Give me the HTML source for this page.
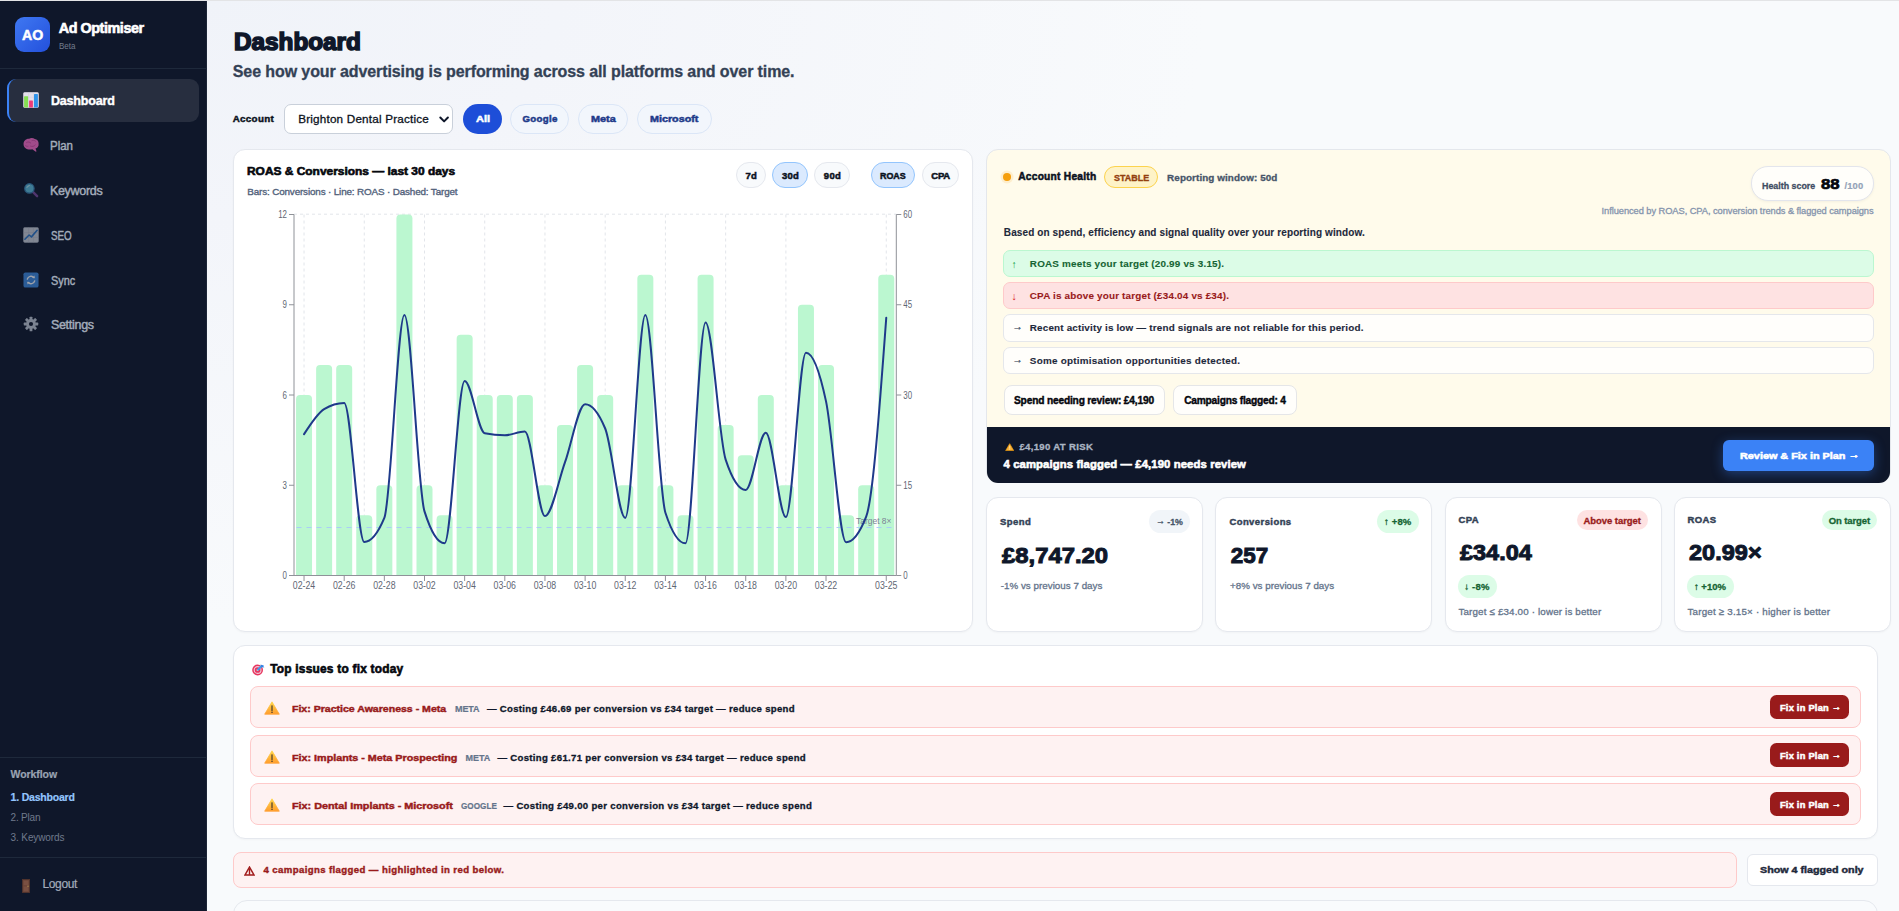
<!DOCTYPE html><html lang="en"><head><meta charset="utf-8"><title>Ad Optimiser — Dashboard</title>
<style>
*{box-sizing:content-box}
html,body{margin:0;padding:0;width:1899px;height:911px;overflow:hidden}
body{font-family:"Liberation Sans","DejaVu Sans",sans-serif;background:#f8fafc;position:relative;-webkit-font-smoothing:antialiased}
.topline{position:absolute;left:0;top:0;width:1899px;height:1px;background:#e3e4e6;z-index:9}
.side{position:absolute;left:0;top:0;width:206px;height:911px;background:#0f172a;border-right:1px solid #1c2537;overflow:hidden}
.main{position:absolute;left:207px;top:0;width:1692px;height:911px;overflow:hidden;
 background:radial-gradient(ellipse 1000px 620px at 0 0,#f0f3f9 0%,#f3f5fa 35%,#f8fafc 100%)}
.pg{position:absolute;left:-207px;top:0;width:1899px;height:911px}
.t{position:absolute;white-space:nowrap;line-height:16px;display:block}
.b{position:absolute;display:block}
.ic{position:absolute;display:block;line-height:0}
.hr{position:absolute;left:0;width:206px;height:1px;background:#1e293b}
svg text{font-family:"Liberation Sans","DejaVu Sans",sans-serif}

.ar{font-style:normal;position:relative;top:-.12em}

</style></head><body>
<div class="topline"></div>
<aside class="side">
<div class="b " style="left:15.0px;top:17.0px;width:35.0px;height:35.0px;border-radius:9px;background:linear-gradient(135deg,#3f78f2 0%,#2350dc 100%);"></div>
<span class="t" style="left: 22.3px; top: 27px; font-size: 14.6px; font-weight: 700; color: rgb(255, 255, 255); -webkit-text-stroke: 0.5px rgb(255, 255, 255); transform: scaleX(0.971); transform-origin: 0px 50%;">AO</span>
<span class="t" style="left: 58.7px; top: 20px; font-size: 14.4px; font-weight: 700; color: rgb(255, 255, 255); -webkit-text-stroke: 0.6px rgb(255, 255, 255); letter-spacing: -0.45px;">Ad Optimiser</span>
<span class="t" style="left: 58.8px; top: 38px; font-size: 9px; font-weight: 400; color: rgb(115, 125, 141); transform: scaleX(0.891); transform-origin: 0px 50%;">Beta</span>
<div class="hr" style="top:68px"></div>
<div class="b " style="left:7.0px;top:79.0px;width:192.0px;height:43.0px;border-radius:9px;background:#272e3f;border-left:2px solid #3b82f6;box-sizing:border-box;"></div>
<span class="ic" style="left:23px;top:91.8px;opacity:1"><svg width="16" height="16" viewBox="0 0 16 16"><rect x=".3" y=".3" width="15.4" height="15.4" rx="1.8" fill="#e3dfea" stroke="#cfcad8" stroke-width=".6"></rect><path d="M5.6 .5v15M10.6 .5v15M.5 5.3h15M.5 10.3h15" stroke="#d2cddb" stroke-width=".5"></path><rect x="1.1" y="4.2" width="4" height="11.4" rx=".5" fill="#86df52"></rect><rect x="6.1" y="8.6" width="3.8" height="7" rx=".5" fill="#ee3c78"></rect><rect x="11" y="2" width="3.9" height="13.6" rx=".5" fill="#2f93ea"></rect></svg></span>
<span class="t" style="left: 50.9px; top: 93px; font-size: 12.5px; font-weight: 700; color: rgb(255, 255, 255); -webkit-text-stroke: 0.4px rgb(255, 255, 255); letter-spacing: -0.17px;">Dashboard</span>
<span class="ic" style="left:23px;top:137.3px;opacity:0.78"><svg width="16" height="16" viewBox="0 0 16 16"><path d="M.6 7.6C.2 4.2 2.8 1.5 6.1 1.7 7.8.6 10.4.800 11.8 2c2.4.2 4 2.2 3.8 4.7.3 2.4-1 4.3-3.1 4.7l.9 2.5c.2.6-.5 1-1 .6L9.3 12.2c-2.5.6-5.3.3-7-1.2C1.1 10.1.6 8.9.6 7.6z" fill="#c95aa6"></path><path d="M3.5 5.6c1.6-1.2 3.4-.7 4.3.5M7.6 9.2c1.7.7 3.5.2 4.6-1.2M5 9.3c-1 .3-2 0-2.6-.7M9 3.5c1.2-.5 2.6-.2 3.4.7" fill="none" stroke="#a63f86" stroke-width=".9" stroke-linecap="round"></path></svg></span>
<span class="t" style="left: 50px; top: 138px; font-size: 12.5px; font-weight: 400; color: rgb(163, 172, 186); -webkit-text-stroke: 0.45px rgb(163, 172, 186); transform: scaleX(0.918); transform-origin: 0px 50%;">Plan</span>
<span class="ic" style="left:23px;top:182.1px;opacity:0.6"><svg width="16" height="16" viewBox="0 0 17 17"><path d="M10.2 10.2 15 15" stroke="#7a4a9a" stroke-width="2.6" stroke-linecap="round"></path><circle cx="6.8" cy="6.8" r="5" fill="#5fc0dc" stroke="#3a7fae" stroke-width="1.3"></circle><path d="M4.2 5.8a3 3 0 0 1 2.6-2" stroke="#d7f2fa" stroke-width="1" fill="none" stroke-linecap="round"></path></svg></span>
<span class="t" style="left: 49.9px; top: 183px; font-size: 12.5px; font-weight: 400; color: rgb(163, 172, 186); -webkit-text-stroke: 0.45px rgb(163, 172, 186); letter-spacing: -0.3px;">Keywords</span>
<span class="ic" style="left:23px;top:227.0px;opacity:0.55"><svg width="16" height="16" viewBox="0 0 17 17"><rect x=".5" y=".5" width="16" height="16" rx="1.5" fill="#dfe3ea" stroke="#b9bfca" stroke-width=".6"></rect><path d="M.5 6h16M.5 11h16M6 .5v16M11 .5v16" stroke="#c3c8d2" stroke-width=".5"></path><path d="M2 13 6.5 8.5 9 10.5 15 3.5" fill="none" stroke="#2f7fd6" stroke-width="1.7" stroke-linecap="round" stroke-linejoin="round"></path></svg></span>
<span class="t" style="left: 50.9px; top: 228px; font-size: 12.5px; font-weight: 400; color: rgb(163, 172, 186); -webkit-text-stroke: 0.45px rgb(163, 172, 186); transform: scaleX(0.785); transform-origin: 0px 50%;">SEO</span>
<span class="ic" style="left:23px;top:272.3px;opacity:0.6"><svg width="16" height="16" viewBox="0 0 17 17"><rect x=".5" y=".5" width="16" height="16" rx="2" fill="#3f8be0"></rect><path d="M4.6 7.6a4 4 0 0 1 7-1.6M12.4 9.4a4 4 0 0 1-7 1.6" fill="none" stroke="#fff" stroke-width="1.5" stroke-linecap="round"></path><path d="M12.3 3.6v2.8h-2.8zM4.7 13.4v-2.8h2.8z" fill="#fff"></path></svg></span>
<span class="t" style="left: 50.9px; top: 273px; font-size: 12.5px; font-weight: 400; color: rgb(163, 172, 186); -webkit-text-stroke: 0.45px rgb(163, 172, 186); transform: scaleX(0.868); transform-origin: 0px 50%;">Sync</span>
<span class="ic" style="left:23px;top:316.3px;opacity:0.7"><svg width="16" height="16" viewBox="0 0 17 17"><g fill="#aab1bd"><circle cx="8.5" cy="8.5" r="5.2"></circle><g id="gt"><rect x="7" y=".8" width="3" height="3.4" rx=".6"></rect><rect x="7" y="12.8" width="3" height="3.4" rx=".6"></rect><rect x=".8" y="7" width="3.4" height="3" rx=".6"></rect><rect x="12.8" y="7" width="3.4" height="3" rx=".6"></rect></g><g transform="rotate(45 8.5 8.5)"><rect x="7" y=".8" width="3" height="3.4" rx=".6"></rect><rect x="7" y="12.8" width="3" height="3.4" rx=".6"></rect><rect x=".8" y="7" width="3.4" height="3" rx=".6"></rect><rect x="12.8" y="7" width="3.4" height="3" rx=".6"></rect></g></g><circle cx="8.5" cy="8.5" r="2.2" fill="#0f172a"></circle></svg></span>
<span class="t" style="left: 50.9px; top: 317px; font-size: 12.5px; font-weight: 400; color: rgb(163, 172, 186); -webkit-text-stroke: 0.45px rgb(163, 172, 186); letter-spacing: -0.28px;">Settings</span>
<div class="hr" style="top:757px"></div>
<span class="t" style="left: 10.6px; top: 766px; font-size: 10.5px; font-weight: 700; color: rgb(154, 163, 178); -webkit-text-stroke: 0.2px rgb(154, 163, 178); letter-spacing: -0.08px;">Workflow</span>
<span class="t" style="left: 10.6px; top: 789px; font-size: 10.5px; font-weight: 700; color: rgb(147, 197, 253); -webkit-text-stroke: 0.2px rgb(147, 197, 253); letter-spacing: -0.21px;">1. Dashboard</span>
<span class="t" style="left: 10.5px; top: 810px; font-size: 10px; font-weight: 400; color: rgb(111, 122, 140); letter-spacing: -0.18px;">2. Plan</span>
<span class="t" style="left: 10.5px; top: 830px; font-size: 10px; font-weight: 400; color: rgb(111, 122, 140); letter-spacing: -0.1px;">3. Keywords</span>
<div class="hr" style="top:857px"></div>
<span class="ic" style="left:22px;top:879px;opacity:.85"><svg width="8" height="14" viewBox="0 0 8 14"><rect x=".4" y=".4" width="7.2" height="13.2" fill="#7f4f3d" stroke="#5f3a2d" stroke-width=".8"></rect><rect x="1.7" y="1.8" width="4.6" height="4.3" fill="#8d5b47"></rect><rect x="1.7" y="7.6" width="4.6" height="4.6" fill="#8d5b47"></rect><circle cx="6" cy="7.2" r=".6" fill="#d9b45c"></circle></svg></span>
<span class="t" style="left: 42.6px; top: 876px; font-size: 12px; font-weight: 400; color: rgb(163, 172, 186); -webkit-text-stroke: 0.2px rgb(163, 172, 186); letter-spacing: -0.41px;">Logout</span>
</aside>
<main class="main"><div class="pg">
<span class="t" style="left: 233.7px; top: 34px; font-size: 23.5px; font-weight: 700; color: rgb(15, 23, 42); -webkit-text-stroke: 1.6px rgb(15, 23, 42); transform: scaleX(1.034); transform-origin: 0px 50%;">Dashboard</span>
<span class="t" style="left: 232.8px; top: 64px; font-size: 16px; font-weight: 700; color: rgb(51, 65, 85); -webkit-text-stroke: 0.3px rgb(51, 65, 85); letter-spacing: -0.1px;">See how your advertising is performing across all platforms and over time.</span>
<span class="t" style="left: 232.7px; top: 111px; font-size: 9.8px; font-weight: 700; color: rgb(11, 17, 32); -webkit-text-stroke: 0.45px rgb(11, 17, 32); letter-spacing: 0.32px;">Account</span>
<div class="b " style="left:284.0px;top:104.0px;width:168.5px;height:29.5px;border-radius:7px;background:#fff;border:1px solid #c9d0da;box-sizing:border-box;"></div>
<span class="t" style="left: 298.2px; top: 111px; font-size: 11.7px; font-weight: 400; color: rgb(11, 17, 32); -webkit-text-stroke: 0.3px rgb(11, 17, 32); letter-spacing: 0.2px;">Brighton Dental Practice</span>
<svg class="b" style="left:438px;top:115px" width="12" height="9" viewBox="0 0 12 9"><path d="M2.3 2.5 6.1 6.4 9.9 2.5" fill="none" stroke="#0f172a" stroke-width="2" stroke-linecap="round" stroke-linejoin="round"></path></svg>
<div class="b " style="left:463.0px;top:104.0px;width:39.0px;height:30.0px;border-radius:15px;background:#1d4ed8;"></div>
<span class="t" style="left: 475.9px; top: 111px; font-size: 9.7px; font-weight: 700; color: rgb(255, 255, 255); -webkit-text-stroke: 0.5px rgb(255, 255, 255); transform: scaleX(1.141); transform-origin: 0px 50%;">All</span>
<div class="b " style="left:510.3px;top:104.0px;width:59.2px;height:30.0px;border-radius:15px;background:#f2f6fc;border:1px solid #dbe6f7;box-sizing:border-box;"></div>
<span class="t" style="left: 522.5px; top: 111px; font-size: 9.7px; font-weight: 700; color: rgb(30, 58, 138); -webkit-text-stroke: 0.5px rgb(30, 58, 138); letter-spacing: 0.3px;">Google</span>
<div class="b " style="left:577.9px;top:104.0px;width:50.6px;height:30.0px;border-radius:15px;background:#f2f6fc;border:1px solid #dbe6f7;box-sizing:border-box;"></div>
<span class="t" style="left: 590.9px; top: 111px; font-size: 9.7px; font-weight: 700; color: rgb(30, 58, 138); -webkit-text-stroke: 0.5px rgb(30, 58, 138); transform: scaleX(1.117); transform-origin: 0px 50%;">Meta</span>
<div class="b " style="left:637.0px;top:104.0px;width:74.7px;height:30.0px;border-radius:15px;background:#f2f6fc;border:1px solid #dbe6f7;box-sizing:border-box;"></div>
<span class="t" style="left: 649.9px; top: 111px; font-size: 9.7px; font-weight: 700; color: rgb(30, 58, 138); -webkit-text-stroke: 0.5px rgb(30, 58, 138); transform: scaleX(1.11); transform-origin: 0px 50%;">Microsoft</span>
<div class="b " style="left:233.0px;top:149.0px;width:740.0px;height:483.0px;border-radius:12px;background:#fff;border:1px solid #e5e8ee;box-sizing:border-box;box-shadow:0 1px 2px rgba(15,23,42,.03);"></div>
<span class="t" style="left: 246.9px; top: 163px; font-size: 11.1px; font-weight: 700; color: rgb(5, 7, 13); -webkit-text-stroke: 0.6px rgb(5, 7, 13); transform: scaleX(1.075); transform-origin: 0px 50%;">ROAS &amp; Conversions — last 30 days</span>
<span class="t" style="left: 247.3px; top: 184px; font-size: 9.9px; font-weight: 400; color: rgb(82, 98, 123); -webkit-text-stroke: 0.35px rgb(82, 98, 123); letter-spacing: -0.15px;">Bars: Conversions · Line: ROAS · Dashed: Target</span>
<div class="b " style="left:736.1px;top:162.0px;width:29.9px;height:25.7px;border-radius:13px;box-sizing:border-box;background:#f8fafc;border:1px solid #e5e8ee;"></div>
<span class="t" style="left: 745.5px; top: 168px; font-size: 9.5px; font-weight: 700; color: rgb(11, 17, 32); -webkit-text-stroke: 0.5px rgb(11, 17, 32); letter-spacing: 0.22px;">7d</span>
<div class="b " style="left:772.1px;top:162.0px;width:35.6px;height:25.7px;border-radius:13px;box-sizing:border-box;background:#dbeafe;border:1px solid #93c5fd;"></div>
<span class="t" style="left: 781.9px; top: 168px; font-size: 9.5px; font-weight: 700; color: rgb(11, 17, 32); -webkit-text-stroke: 0.5px rgb(11, 17, 32); letter-spacing: 0.32px;">30d</span>
<div class="b " style="left:814.4px;top:162.0px;width:35.4px;height:25.7px;border-radius:13px;box-sizing:border-box;background:#f8fafc;border:1px solid #e5e8ee;"></div>
<span class="t" style="left: 823.8px; top: 168px; font-size: 9.5px; font-weight: 700; color: rgb(11, 17, 32); -webkit-text-stroke: 0.5px rgb(11, 17, 32); letter-spacing: 0.32px;">90d</span>
<div class="b " style="left:870.9px;top:162.0px;width:43.9px;height:25.7px;border-radius:13px;box-sizing:border-box;background:#dbeafe;border:1px solid #93c5fd;"></div>
<span class="t" style="left: 880.3px; top: 168px; font-size: 9.5px; font-weight: 700; color: rgb(11, 17, 32); -webkit-text-stroke: 0.5px rgb(11, 17, 32); transform: scaleX(0.938); transform-origin: 0px 50%;">ROAS</span>
<div class="b " style="left:922.1px;top:162.0px;width:36.7px;height:25.7px;border-radius:13px;box-sizing:border-box;background:#f8fafc;border:1px solid #e5e8ee;"></div>
<span class="t" style="left: 931.3px; top: 168px; font-size: 9.5px; font-weight: 700; color: rgb(11, 17, 32); -webkit-text-stroke: 0.5px rgb(11, 17, 32); letter-spacing: -0.25px;">CPA</span>
<div class="b" style="left:233px;top:150px"><svg class="chart" width="740" height="482" viewBox="233 150 740 482">
<g stroke="#e2e5ea" stroke-width="1" stroke-dasharray="3 3" fill="none">
<line x1="294.0" y1="214.2" x2="896.3" y2="214.2"></line>
<line x1="304.04" y1="214.5" x2="304.04" y2="575.5"></line>
<line x1="364.27" y1="214.5" x2="364.27" y2="575.5"></line>
<line x1="424.50" y1="214.5" x2="424.50" y2="575.5"></line>
<line x1="484.73" y1="214.5" x2="484.73" y2="575.5"></line>
<line x1="544.96" y1="214.5" x2="544.96" y2="575.5"></line>
<line x1="605.19" y1="214.5" x2="605.19" y2="575.5"></line>
<line x1="665.42" y1="214.5" x2="665.42" y2="575.5"></line>
<line x1="725.65" y1="214.5" x2="725.65" y2="575.5"></line>
<line x1="785.88" y1="214.5" x2="785.88" y2="575.5"></line>
<line x1="886.26" y1="214.5" x2="886.26" y2="575.5"></line>
</g>
<g fill="#bbf7d0">
<path d="M296.04,575.50V399.00Q296.04,395.00,300.04,395.00H308.04Q312.04,395.00,312.04,399.00V575.50Z"></path>
<path d="M316.12,575.50V368.92Q316.12,364.92,320.12,364.92H328.12Q332.12,364.92,332.12,368.92V575.50Z"></path>
<path d="M336.19,575.50V368.92Q336.19,364.92,340.19,364.92H348.19Q352.19,364.92,352.19,368.92V575.50Z"></path>
<path d="M356.27,575.50V519.33Q356.27,515.33,360.27,515.33H368.27Q372.27,515.33,372.27,519.33V575.50Z"></path>
<path d="M376.34,575.50V489.25Q376.34,485.25,380.34,485.25H388.34Q392.34,485.25,392.34,489.25V575.50Z"></path>
<path d="M396.42,575.50V218.50Q396.42,214.50,400.42,214.50H408.42Q412.42,214.50,412.42,218.50V575.50Z"></path>
<path d="M416.50,575.50V489.25Q416.50,485.25,420.50,485.25H428.50Q432.50,485.25,432.50,489.25V575.50Z"></path>
<path d="M436.57,575.50V519.33Q436.57,515.33,440.57,515.33H448.57Q452.57,515.33,452.57,519.33V575.50Z"></path>
<path d="M456.65,575.50V338.83Q456.65,334.83,460.65,334.83H468.65Q472.65,334.83,472.65,338.83V575.50Z"></path>
<path d="M476.73,575.50V399.00Q476.73,395.00,480.73,395.00H488.73Q492.73,395.00,492.73,399.00V575.50Z"></path>
<path d="M496.80,575.50V399.00Q496.80,395.00,500.80,395.00H508.80Q512.80,395.00,512.80,399.00V575.50Z"></path>
<path d="M516.88,575.50V399.00Q516.88,395.00,520.88,395.00H528.88Q532.88,395.00,532.88,399.00V575.50Z"></path>
<path d="M536.96,575.50V489.25Q536.96,485.25,540.96,485.25H548.96Q552.96,485.25,552.96,489.25V575.50Z"></path>
<path d="M557.03,575.50V429.08Q557.03,425.08,561.03,425.08H569.03Q573.03,425.08,573.03,429.08V575.50Z"></path>
<path d="M577.11,575.50V368.92Q577.11,364.92,581.11,364.92H589.11Q593.11,364.92,593.11,368.92V575.50Z"></path>
<path d="M597.19,575.50V399.00Q597.19,395.00,601.19,395.00H609.19Q613.19,395.00,613.19,399.00V575.50Z"></path>
<path d="M617.26,575.50V489.25Q617.26,485.25,621.26,485.25H629.26Q633.26,485.25,633.26,489.25V575.50Z"></path>
<path d="M637.34,575.50V278.67Q637.34,274.67,641.34,274.67H649.34Q653.34,274.67,653.34,278.67V575.50Z"></path>
<path d="M657.42,575.50V489.25Q657.42,485.25,661.42,485.25H669.42Q673.42,485.25,673.42,489.25V575.50Z"></path>
<path d="M677.49,575.50V519.33Q677.49,515.33,681.49,515.33H689.49Q693.49,515.33,693.49,519.33V575.50Z"></path>
<path d="M697.57,575.50V278.67Q697.57,274.67,701.57,274.67H709.57Q713.57,274.67,713.57,278.67V575.50Z"></path>
<path d="M717.65,575.50V429.08Q717.65,425.08,721.65,425.08H729.65Q733.65,425.08,733.65,429.08V575.50Z"></path>
<path d="M737.72,575.50V459.17Q737.72,455.17,741.72,455.17H749.72Q753.72,455.17,753.72,459.17V575.50Z"></path>
<path d="M757.80,575.50V399.00Q757.80,395.00,761.80,395.00H769.80Q773.80,395.00,773.80,399.00V575.50Z"></path>
<path d="M777.88,575.50V489.25Q777.88,485.25,781.88,485.25H789.88Q793.88,485.25,793.88,489.25V575.50Z"></path>
<path d="M797.95,575.50V308.75Q797.95,304.75,801.95,304.75H809.95Q813.95,304.75,813.95,308.75V575.50Z"></path>
<path d="M818.03,575.50V368.92Q818.03,364.92,822.03,364.92H830.03Q834.03,364.92,834.03,368.92V575.50Z"></path>
<path d="M838.11,575.50V519.33Q838.11,515.33,842.11,515.33H850.11Q854.11,515.33,854.11,519.33V575.50Z"></path>
<path d="M858.18,575.50V489.25Q858.18,485.25,862.18,485.25H870.18Q874.18,485.25,874.18,489.25V575.50Z"></path>
<path d="M878.26,575.50V278.67Q878.26,274.67,882.26,274.67H890.26Q894.26,274.67,894.26,278.67V575.50Z"></path>
</g>
<line x1="296.5" y1="527.5" x2="896.3" y2="527.5" stroke="#a9cdf7" stroke-width="1" stroke-dasharray="5 5"></line>
<text x="891.5" y="524" text-anchor="end" font-size="9.5" fill="#7b8494" textLength="35.5" lengthAdjust="spacingAndGlyphs">Target 8×</text>
<g stroke="#8f9298" stroke-width="1" fill="none">
<line x1="294.0" y1="214.5" x2="294.0" y2="575.5"></line>
<line x1="896.3" y1="214.5" x2="896.3" y2="575.5"></line>
<line x1="294.0" y1="575.5" x2="896.3" y2="575.5"></line>
<line x1="289.0" y1="575.50" x2="294.0" y2="575.50"></line>
<line x1="896.3" y1="575.50" x2="901.3" y2="575.50"></line>
<line x1="289.0" y1="485.25" x2="294.0" y2="485.25"></line>
<line x1="896.3" y1="485.25" x2="901.3" y2="485.25"></line>
<line x1="289.0" y1="395.00" x2="294.0" y2="395.00"></line>
<line x1="896.3" y1="395.00" x2="901.3" y2="395.00"></line>
<line x1="289.0" y1="304.75" x2="294.0" y2="304.75"></line>
<line x1="896.3" y1="304.75" x2="901.3" y2="304.75"></line>
<line x1="289.0" y1="214.50" x2="294.0" y2="214.50"></line>
<line x1="896.3" y1="214.50" x2="901.3" y2="214.50"></line>
<line x1="304.04" y1="575.5" x2="304.04" y2="581.0"></line>
<line x1="344.19" y1="575.5" x2="344.19" y2="581.0"></line>
<line x1="384.34" y1="575.5" x2="384.34" y2="581.0"></line>
<line x1="424.50" y1="575.5" x2="424.50" y2="581.0"></line>
<line x1="464.65" y1="575.5" x2="464.65" y2="581.0"></line>
<line x1="504.80" y1="575.5" x2="504.80" y2="581.0"></line>
<line x1="544.96" y1="575.5" x2="544.96" y2="581.0"></line>
<line x1="585.11" y1="575.5" x2="585.11" y2="581.0"></line>
<line x1="625.26" y1="575.5" x2="625.26" y2="581.0"></line>
<line x1="665.42" y1="575.5" x2="665.42" y2="581.0"></line>
<line x1="705.57" y1="575.5" x2="705.57" y2="581.0"></line>
<line x1="745.72" y1="575.5" x2="745.72" y2="581.0"></line>
<line x1="785.88" y1="575.5" x2="785.88" y2="581.0"></line>
<line x1="826.03" y1="575.5" x2="826.03" y2="581.0"></line>
<line x1="886.26" y1="575.5" x2="886.26" y2="581.0"></line>
</g>
<g font-size="10" fill="#5f6774">
<text x="287.0" y="579.00" text-anchor="end" textLength="4.4" lengthAdjust="spacingAndGlyphs">0</text>
<text x="903.3" y="579.00" textLength="4.4" lengthAdjust="spacingAndGlyphs">0</text>
<text x="287.0" y="488.75" text-anchor="end" textLength="4.4" lengthAdjust="spacingAndGlyphs">3</text>
<text x="903.3" y="488.75" textLength="8.8" lengthAdjust="spacingAndGlyphs">15</text>
<text x="287.0" y="398.50" text-anchor="end" textLength="4.4" lengthAdjust="spacingAndGlyphs">6</text>
<text x="903.3" y="398.50" textLength="8.8" lengthAdjust="spacingAndGlyphs">30</text>
<text x="287.0" y="308.25" text-anchor="end" textLength="4.4" lengthAdjust="spacingAndGlyphs">9</text>
<text x="903.3" y="308.25" textLength="8.8" lengthAdjust="spacingAndGlyphs">45</text>
<text x="287.0" y="218.00" text-anchor="end" textLength="8.8" lengthAdjust="spacingAndGlyphs">12</text>
<text x="903.3" y="218.00" textLength="8.8" lengthAdjust="spacingAndGlyphs">60</text>
<text x="304.04" y="589.4" text-anchor="middle" textLength="22.4" lengthAdjust="spacingAndGlyphs">02-24</text>
<text x="344.19" y="589.4" text-anchor="middle" textLength="22.4" lengthAdjust="spacingAndGlyphs">02-26</text>
<text x="384.34" y="589.4" text-anchor="middle" textLength="22.4" lengthAdjust="spacingAndGlyphs">02-28</text>
<text x="424.50" y="589.4" text-anchor="middle" textLength="22.4" lengthAdjust="spacingAndGlyphs">03-02</text>
<text x="464.65" y="589.4" text-anchor="middle" textLength="22.4" lengthAdjust="spacingAndGlyphs">03-04</text>
<text x="504.80" y="589.4" text-anchor="middle" textLength="22.4" lengthAdjust="spacingAndGlyphs">03-06</text>
<text x="544.96" y="589.4" text-anchor="middle" textLength="22.4" lengthAdjust="spacingAndGlyphs">03-08</text>
<text x="585.11" y="589.4" text-anchor="middle" textLength="22.4" lengthAdjust="spacingAndGlyphs">03-10</text>
<text x="625.26" y="589.4" text-anchor="middle" textLength="22.4" lengthAdjust="spacingAndGlyphs">03-12</text>
<text x="665.42" y="589.4" text-anchor="middle" textLength="22.4" lengthAdjust="spacingAndGlyphs">03-14</text>
<text x="705.57" y="589.4" text-anchor="middle" textLength="22.4" lengthAdjust="spacingAndGlyphs">03-16</text>
<text x="745.72" y="589.4" text-anchor="middle" textLength="22.4" lengthAdjust="spacingAndGlyphs">03-18</text>
<text x="785.88" y="589.4" text-anchor="middle" textLength="22.4" lengthAdjust="spacingAndGlyphs">03-20</text>
<text x="826.03" y="589.4" text-anchor="middle" textLength="22.4" lengthAdjust="spacingAndGlyphs">03-22</text>
<text x="886.26" y="589.4" text-anchor="middle" textLength="22.4" lengthAdjust="spacingAndGlyphs">03-25</text>
</g>
<path d="M304.04,434.20C310.73,423.72,317.42,413.23,324.12,409.10C330.81,404.97,337.50,402.90,344.19,402.90C350.88,402.90,357.58,542.00,364.27,542.00C370.96,542.00,377.65,533.97,384.34,517.90C391.04,501.83,397.73,315.10,404.42,315.10C411.11,315.10,417.81,490.13,424.50,511.40C431.19,532.67,437.88,543.30,444.57,543.30C451.27,543.30,457.96,380.90,464.65,380.90C471.34,380.90,478.04,431.80,484.73,433.20C491.42,434.60,498.11,435.30,504.80,435.30C511.50,435.30,518.19,431.40,524.88,431.40C531.57,431.40,538.27,516.10,544.96,516.10C551.65,516.10,558.34,480.85,565.03,462.20C571.73,443.55,578.42,404.20,585.11,404.20C591.80,404.20,598.50,412.30,605.19,428.50C611.88,444.70,618.57,517.90,625.26,517.90C631.96,517.90,638.65,315.10,645.34,315.10C652.03,315.10,658.73,492.30,665.42,512.70C672.11,533.10,678.80,543.30,685.49,543.30C692.19,543.30,698.88,322.40,705.57,322.40C712.26,322.40,718.96,439.40,725.65,459.60C732.34,479.80,739.03,489.90,745.72,489.90C752.42,489.90,759.11,432.70,765.80,432.70C772.49,432.70,779.19,517.10,785.88,517.10C792.57,517.10,799.26,352.70,805.95,352.70C812.65,352.70,819.34,369.82,826.03,401.40C832.72,432.98,839.42,542.20,846.11,542.20C852.80,542.20,859.49,533.67,866.18,516.60C872.88,499.53,879.57,408.62,886.26,317.70" fill="none" stroke="#1e3a8a" stroke-width="2" stroke-linecap="round" stroke-linejoin="round"></path>
</svg></div>
<div class="b " style="left:986.0px;top:149.0px;width:905.0px;height:334.0px;border-radius:12px;background:#fffbeb;border:1px solid #e4e7ec;box-sizing:border-box;"></div>
<div class="b " style="left:987.0px;top:427.0px;width:903.0px;height:55.7px;border-radius:0 0 11px 11px;background:#0f172a;"></div>
<div class="b " style="left:1002.9px;top:172.8px;width:8.4px;height:8.4px;border-radius:50%;background:#f59e0b;box-shadow:0 0 0 2.5px rgba(245,158,11,.13);"></div>
<span class="t" style="left: 1018.2px; top: 169px; font-size: 10.2px; font-weight: 700; color: rgb(11, 17, 32); -webkit-text-stroke: 0.5px rgb(11, 17, 32); letter-spacing: 0.25px;">Account Health</span>
<div class="b " style="left:1104.0px;top:166.0px;width:53.7px;height:22.0px;border-radius:11px;background:#fef3c7;border:1px solid #fcd34d;box-sizing:border-box;"></div>
<span class="t" style="left: 1113.7px; top: 170px; font-size: 9.9px; font-weight: 700; color: rgb(146, 64, 14); -webkit-text-stroke: 0.35px rgb(146, 64, 14); transform: scaleX(0.906); transform-origin: 0px 50%;">STABLE</span>
<span class="t" style="left: 1167.1px; top: 170px; font-size: 9.9px; font-weight: 700; color: rgb(71, 85, 105); -webkit-text-stroke: 0.3px rgb(71, 85, 105); letter-spacing: 0.08px;">Reporting window: 50d</span>
<div class="b " style="left:1751.3px;top:166.3px;width:122.5px;height:34.3px;border-radius:17px;background:#fffefa;border:1px solid #e3e5ec;box-sizing:border-box;box-shadow:0 1px 3px rgba(15,23,42,.05);"></div>
<span class="t" style="left: 1762px; top: 178px; font-size: 9.8px; font-weight: 700; color: rgb(63, 77, 99); -webkit-text-stroke: 0.3px rgb(63, 77, 99); transform: scaleX(0.904); transform-origin: 0px 50%;">Health score</span>
<span class="t" style="left: 1821.2px; top: 176px; font-size: 15.2px; font-weight: 700; color: rgb(5, 7, 13); -webkit-text-stroke: 0.7px rgb(5, 7, 13); transform: scaleX(1.102); transform-origin: 0px 50%;">88</span>
<span class="t" style="left: 1844.4px; top: 178px; font-size: 9.4px; font-weight: 700; color: rgb(148, 163, 184); -webkit-text-stroke: 0.2px rgb(148, 163, 184); letter-spacing: 0.19px;">/100</span>
<span class="t" style="left: 1601.5px; top: 203px; font-size: 9.3px; font-weight: 400; color: rgb(133, 148, 173); -webkit-text-stroke: 0.3px rgb(133, 148, 173); letter-spacing: -0.06px;">Influenced by ROAS, CPA, conversion trends &amp; flagged campaigns</span>
<span class="t" style="left: 1003.8px; top: 225px; font-size: 10px; font-weight: 700; color: rgb(30, 41, 59); -webkit-text-stroke: 0.1px rgb(30, 41, 59); letter-spacing: 0.11px;">Based on spend, efficiency and signal quality over your reporting window.</span>
<div class="b " style="left:1003.2px;top:250.3px;width:870.6px;height:26.5px;border-radius:7px;background:#dcfce7;border:1px solid #bbf7d0;box-sizing:border-box;"></div>
<span class="t" style="left:1011.6px;top:256px;font-size:10.5px;font-weight:700;color:#16a34a;">↑</span>
<span class="t" style="left: 1029.8px; top: 256px; font-size: 9.9px; font-weight: 700; color: rgb(22, 101, 52); -webkit-text-stroke: 0.1px rgb(22, 101, 52); letter-spacing: 0.2px;">ROAS meets your target (20.99 vs 3.15).</span>
<div class="b " style="left:1003.2px;top:282.2px;width:870.6px;height:27.2px;border-radius:7px;background:#fee2e2;border:1px solid #fecaca;box-sizing:border-box;"></div>
<span class="t" style="left:1011.6px;top:288px;font-size:10.5px;font-weight:700;color:#dc2626;">↓</span>
<span class="t" style="left: 1029.8px; top: 288px; font-size: 9.9px; font-weight: 700; color: rgb(153, 27, 27); -webkit-text-stroke: 0.1px rgb(153, 27, 27); letter-spacing: 0.19px;">CPA is above your target (£34.04 vs £34).</span>
<div class="b " style="left:1003.2px;top:314.1px;width:870.6px;height:27.5px;border-radius:7px;background:#fffefb;border:1px solid #e5e7eb;box-sizing:border-box;"></div>
<span class="t" style="left:1012.6px;top:320px;font-size:10px;font-weight:700;color:#475569;-webkit-text-stroke:0.3px #475569;"><i class="ar">→</i></span>
<span class="t" style="left: 1029.8px; top: 320px; font-size: 9.9px; font-weight: 700; color: rgb(30, 41, 59); -webkit-text-stroke: 0.1px rgb(30, 41, 59); letter-spacing: 0.17px;">Recent activity is low — trend signals are not reliable for this period.</span>
<div class="b " style="left:1003.2px;top:347.0px;width:870.6px;height:26.8px;border-radius:7px;background:#fffefb;border:1px solid #e5e7eb;box-sizing:border-box;"></div>
<span class="t" style="left:1012.6px;top:353px;font-size:10px;font-weight:700;color:#475569;-webkit-text-stroke:0.3px #475569;"><i class="ar">→</i></span>
<span class="t" style="left: 1029.8px; top: 353px; font-size: 9.9px; font-weight: 700; color: rgb(30, 41, 59); -webkit-text-stroke: 0.1px rgb(30, 41, 59); letter-spacing: 0.25px;">Some optimisation opportunities detected.</span>
<div class="b " style="left:1003.5px;top:385.4px;width:161.3px;height:29.2px;border-radius:8px;background:#fffefb;border:1px solid #e5e6e8;box-sizing:border-box;"></div>
<span class="t" style="left: 1014px; top: 393px; font-size: 10.2px; font-weight: 700; color: rgb(5, 7, 13); -webkit-text-stroke: 0.4px rgb(5, 7, 13); letter-spacing: -0.18px;">Spend needing review: £4,190</span>
<div class="b " style="left:1173.4px;top:385.4px;width:123.3px;height:29.2px;border-radius:8px;background:#fffefb;border:1px solid #e5e6e8;box-sizing:border-box;"></div>
<span class="t" style="left: 1184.2px; top: 393px; font-size: 10.2px; font-weight: 700; color: rgb(5, 7, 13); -webkit-text-stroke: 0.4px rgb(5, 7, 13); letter-spacing: -0.22px;">Campaigns flagged: 4</span>
<span class="ic" style="left:1004.6px;top:443px"><svg width="9.4" height="8.4" viewBox="0 0 16 15"><path d="M8 1.2 15.2 13.6H.8z" fill="#f8b23a" stroke="#f59e0b" stroke-width="1.2" stroke-linejoin="round"></path><path d="M8 5.5v4" stroke="#fde8b8" stroke-width="1.4" stroke-linecap="round"></path><circle cx="8" cy="11.6" r=".8" fill="#fde8b8"></circle></svg></span>
<span class="t" style="left: 1019.4px; top: 439px; font-size: 9.6px; font-weight: 700; color: rgb(170, 180, 195); -webkit-text-stroke: 0.3px rgb(170, 180, 195); letter-spacing: 0.32px;">£4,190 AT RISK</span>
<span class="t" style="left: 1003.5px; top: 456px; font-size: 11.3px; font-weight: 700; color: rgb(255, 255, 255); -webkit-text-stroke: 0.6px rgb(255, 255, 255); letter-spacing: 0.11px;">4 campaigns flagged — £4,190 needs review</span>
<div class="b " style="left:1723.1px;top:439.9px;width:151.1px;height:31.2px;border-radius:6px;background:#3b82f6;box-shadow:0 3px 12px rgba(59,130,246,.38);"></div>
<span class="t" style="left: 1739.9px; top: 448px; font-size: 9.6px; font-weight: 700; color: rgb(255, 255, 255); -webkit-text-stroke: 0.55px rgb(255, 255, 255); transform: scaleX(1.13); transform-origin: 0px 50%;">Review &amp; Fix in Plan <i class="ar">→</i></span>
<div class="b " style="left:986.0px;top:497.0px;width:217.2px;height:135.0px;border-radius:12px;background:#fff;border:1px solid #e5e8ee;box-sizing:border-box;box-shadow:0 1px 2px rgba(15,23,42,.03);"></div>
<div class="b " style="left:1215.2px;top:497.0px;width:217.2px;height:135.0px;border-radius:12px;background:#fff;border:1px solid #e5e8ee;box-sizing:border-box;box-shadow:0 1px 2px rgba(15,23,42,.03);"></div>
<div class="b " style="left:1444.5px;top:497.0px;width:217.2px;height:135.0px;border-radius:12px;background:#fff;border:1px solid #e5e8ee;box-sizing:border-box;box-shadow:0 1px 2px rgba(15,23,42,.03);"></div>
<div class="b " style="left:1673.8px;top:497.0px;width:217.2px;height:135.0px;border-radius:12px;background:#fff;border:1px solid #e5e8ee;box-sizing:border-box;box-shadow:0 1px 2px rgba(15,23,42,.03);"></div>
<span class="t" style="left: 1000.1px; top: 514px; font-size: 9.5px; font-weight: 700; color: rgb(51, 65, 85); -webkit-text-stroke: 0.45px rgb(51, 65, 85); letter-spacing: 0.41px;">Spend</span>
<div class="b " style="left:1149.2px;top:509.9px;width:40.7px;height:23.0px;border-radius:12px;background:#f1f5f9;"></div><span class="t" style="left: 1155.6px; top: 514px; font-size: 9.5px; font-weight: 700; color: rgb(71, 85, 105); -webkit-text-stroke: 0.3px rgb(71, 85, 105); transform: scaleX(0.928); transform-origin: 0px 50%;"><i class="ar">→</i> -1%</span>
<span class="t" style="left: 1001.8px; top: 548px; font-size: 22.4px; font-weight: 700; color: rgb(15, 23, 42); -webkit-text-stroke: 1px rgb(15, 23, 42); transform: scaleX(1.065); transform-origin: 0px 50%;">£8,747.20</span>
<span class="t" style="left: 1000.7px; top: 578px; font-size: 9.8px; font-weight: 400; color: rgb(100, 116, 139); -webkit-text-stroke: 0.3px rgb(100, 116, 139); letter-spacing: 0.02px;">-1% vs previous 7 days</span>
<span class="t" style="left: 1229.4px; top: 514px; font-size: 9.5px; font-weight: 700; color: rgb(51, 65, 85); -webkit-text-stroke: 0.45px rgb(51, 65, 85); letter-spacing: 0.42px;">Conversions</span>
<div class="b " style="left:1377.0px;top:509.9px;width:41.8px;height:23.0px;border-radius:12px;background:#dcfce7;"></div><span class="t" style="left: 1383.9px; top: 514px; font-size: 9.5px; font-weight: 700; color: rgb(22, 101, 52); -webkit-text-stroke: 0.3px rgb(22, 101, 52); letter-spacing: 0.19px;">↑ +8%</span>
<span class="t" style="left: 1230.8px; top: 548px; font-size: 22.4px; font-weight: 700; color: rgb(15, 23, 42); -webkit-text-stroke: 1px rgb(15, 23, 42); letter-spacing: 0.05px;">257</span>
<span class="t" style="left: 1230px; top: 578px; font-size: 9.8px; font-weight: 400; color: rgb(100, 116, 139); -webkit-text-stroke: 0.3px rgb(100, 116, 139); letter-spacing: 0.02px;">+8% vs previous 7 days</span>
<span class="t" style="left: 1458.4px; top: 512px; font-size: 9.5px; font-weight: 700; color: rgb(51, 65, 85); -webkit-text-stroke: 0.45px rgb(51, 65, 85); letter-spacing: 0.38px;">CPA</span>
<div class="b " style="left:1577.3px;top:510.2px;width:70.6px;height:19.9px;border-radius:12px;background:#fee2e2;"></div><span class="t" style="left: 1583.5px; top: 513px; font-size: 9.5px; font-weight: 700; color: rgb(153, 27, 27); -webkit-text-stroke: 0.3px rgb(153, 27, 27); letter-spacing: -0.05px;">Above target</span>
<span class="t" style="left: 1460px; top: 545px; font-size: 22.4px; font-weight: 700; color: rgb(15, 23, 42); -webkit-text-stroke: 1px rgb(15, 23, 42); transform: scaleX(1.048); transform-origin: 0px 50%;">£34.04</span>
<div class="b " style="left:1458.2px;top:575.0px;width:38.8px;height:22.6px;border-radius:12px;background:#dcfce7;"></div><span class="t" style="left: 1464.2px; top: 579px; font-size: 9.5px; font-weight: 700; color: rgb(22, 101, 52); -webkit-text-stroke: 0.3px rgb(22, 101, 52); letter-spacing: 0.27px;">↓ -8%</span>
<span class="t" style="left: 1458.4px; top: 604px; font-size: 9.8px; font-weight: 400; color: rgb(100, 116, 139); -webkit-text-stroke: 0.3px rgb(100, 116, 139); letter-spacing: 0.16px;">Target ≤ £34.00 · lower is better</span>
<span class="t" style="left: 1687.5px; top: 512px; font-size: 9.5px; font-weight: 700; color: rgb(51, 65, 85); -webkit-text-stroke: 0.45px rgb(51, 65, 85); letter-spacing: 0.41px;">ROAS</span>
<div class="b " style="left:1822.2px;top:510.2px;width:54.6px;height:19.9px;border-radius:12px;background:#dcfce7;"></div><span class="t" style="left: 1828.7px; top: 513px; font-size: 9.5px; font-weight: 700; color: rgb(22, 101, 52); -webkit-text-stroke: 0.3px rgb(22, 101, 52); letter-spacing: -0.1px;">On target</span>
<span class="t" style="left: 1688.9px; top: 545px; font-size: 22.4px; font-weight: 700; color: rgb(15, 23, 42); -webkit-text-stroke: 1px rgb(15, 23, 42); transform: scaleX(1.051); transform-origin: 0px 50%;">20.99×</span>
<div class="b " style="left:1687.3px;top:575.0px;width:46.6px;height:22.6px;border-radius:12px;background:#dcfce7;"></div><span class="t" style="left: 1694px; top: 579px; font-size: 9.5px; font-weight: 700; color: rgb(22, 101, 52); -webkit-text-stroke: 0.3px rgb(22, 101, 52); letter-spacing: -0.02px;">↑ +10%</span>
<span class="t" style="left: 1687.5px; top: 604px; font-size: 9.8px; font-weight: 400; color: rgb(100, 116, 139); -webkit-text-stroke: 0.3px rgb(100, 116, 139); letter-spacing: 0.19px;">Target ≥ 3.15× · higher is better</span>
<div class="b " style="left:233.0px;top:645.0px;width:1645.0px;height:194.0px;border-radius:12px;background:#fff;border:1px solid #e5e8ee;box-sizing:border-box;box-shadow:0 1px 2px rgba(15,23,42,.03);"></div>
<span class="ic" style="left:251.5px;top:663px"><svg width="13" height="13" viewBox="0 0 13 13"><circle cx="5.6" cy="7" r="5.4" fill="#e8365f"></circle><circle cx="5.6" cy="7" r="3.4" fill="none" stroke="#ecc9d8" stroke-width="1.1"></circle><circle cx="5.6" cy="7" r="1.1" fill="#d9cfd9"></circle><path d="M6.2 6.4 9.6 3" stroke="#3d9be9" stroke-width="2.1" stroke-linecap="round"></path><path d="M8.6 1.2 10 2.2 11.6 1.9 11.3 3.3 12.4 4.3 10.6 4.6 9.2 3.6z" fill="#2f7fe3"></path></svg></span>
<span class="t" style="left: 270.2px; top: 661px; font-size: 11.9px; font-weight: 700; color: rgb(5, 7, 13); -webkit-text-stroke: 0.6px rgb(5, 7, 13); letter-spacing: 0.23px;">Top issues to fix today</span>
<div class="b " style="left:250.3px;top:686.0px;width:1610.5px;height:41.7px;border-radius:8px;background:#fef2f2;border:1px solid #fecaca;box-sizing:border-box;"></div>
<span class="ic" style="left:263.7px;top:701.0px"><svg width="16" height="14" viewBox="0 0 16 14"><defs><linearGradient id="wg" x1="0" y1="0" x2="0" y2="1"><stop offset="0" stop-color="#ffd54a"></stop><stop offset="1" stop-color="#ff9d2e"></stop></linearGradient></defs><path d="M8 .8 15.3 13.2H.700z" fill="url(#wg)" stroke="url(#wg)" stroke-width=".8" stroke-linejoin="round"></path><path d="M8 4.8v4.6" stroke="#33302b" stroke-width="1.1" stroke-linecap="round"></path><circle cx="8" cy="11.3" r=".75" fill="#33302b"></circle></svg></span>
<span class="t" style="left: 291.8px; top: 701px; font-size: 9.6px; font-weight: 700; color: rgb(153, 27, 27); -webkit-text-stroke: 0.45px rgb(153, 27, 27); transform: scaleX(1.099); transform-origin: 0px 50%;">Fix: Practice Awareness - Meta</span>
<span class="t" style="left: 455px; top: 701px; font-size: 9px; font-weight: 700; color: rgb(100, 116, 139); -webkit-text-stroke: 0.2px rgb(100, 116, 139); letter-spacing: -0.08px;">META</span>
<span class="t" style="left: 486.9px; top: 701px; font-size: 9.6px; font-weight: 700; color: rgb(15, 23, 42); -webkit-text-stroke: 0.3px rgb(15, 23, 42); letter-spacing: 0.3px;">— Costing £46.69 per conversion vs £34 target — reduce spend</span>
<div class="b " style="left:1770.1px;top:695.0px;width:79.0px;height:24.0px;border-radius:6.5px;background:#991b1b;"></div>
<span class="t" style="left: 1779.9px; top: 700px; font-size: 9.3px; font-weight: 700; color: rgb(255, 255, 255); -webkit-text-stroke: 0.5px rgb(255, 255, 255); letter-spacing: 0.24px;">Fix in Plan <i class="ar">→</i></span>
<div class="b " style="left:250.3px;top:734.9px;width:1610.5px;height:41.7px;border-radius:8px;background:#fef2f2;border:1px solid #fecaca;box-sizing:border-box;"></div>
<span class="ic" style="left:263.7px;top:749.8px"><svg width="16" height="14" viewBox="0 0 16 14"><defs><linearGradient id="wg" x1="0" y1="0" x2="0" y2="1"><stop offset="0" stop-color="#ffd54a"></stop><stop offset="1" stop-color="#ff9d2e"></stop></linearGradient></defs><path d="M8 .8 15.3 13.2H.700z" fill="url(#wg)" stroke="url(#wg)" stroke-width=".8" stroke-linejoin="round"></path><path d="M8 4.8v4.6" stroke="#33302b" stroke-width="1.1" stroke-linecap="round"></path><circle cx="8" cy="11.3" r=".75" fill="#33302b"></circle></svg></span>
<span class="t" style="left: 291.9px; top: 750px; font-size: 9.6px; font-weight: 700; color: rgb(153, 27, 27); -webkit-text-stroke: 0.45px rgb(153, 27, 27); transform: scaleX(1.12); transform-origin: 0px 50%;">Fix: Implants - Meta Prospecting</span>
<span class="t" style="left: 465.5px; top: 750px; font-size: 9px; font-weight: 700; color: rgb(100, 116, 139); -webkit-text-stroke: 0.2px rgb(100, 116, 139); letter-spacing: -0.04px;">META</span>
<span class="t" style="left: 497.4px; top: 750px; font-size: 9.6px; font-weight: 700; color: rgb(15, 23, 42); -webkit-text-stroke: 0.3px rgb(15, 23, 42); letter-spacing: 0.31px;">— Costing £61.71 per conversion vs £34 target — reduce spend</span>
<div class="b " style="left:1770.1px;top:743.0px;width:79.0px;height:24.0px;border-radius:6.5px;background:#991b1b;"></div>
<span class="t" style="left: 1779.9px; top: 748px; font-size: 9.3px; font-weight: 700; color: rgb(255, 255, 255); -webkit-text-stroke: 0.5px rgb(255, 255, 255); letter-spacing: 0.24px;">Fix in Plan <i class="ar">→</i></span>
<div class="b " style="left:250.3px;top:783.4px;width:1610.5px;height:41.2px;border-radius:8px;background:#fef2f2;border:1px solid #fecaca;box-sizing:border-box;"></div>
<span class="ic" style="left:263.7px;top:797.8px"><svg width="16" height="14" viewBox="0 0 16 14"><defs><linearGradient id="wg" x1="0" y1="0" x2="0" y2="1"><stop offset="0" stop-color="#ffd54a"></stop><stop offset="1" stop-color="#ff9d2e"></stop></linearGradient></defs><path d="M8 .8 15.3 13.2H.700z" fill="url(#wg)" stroke="url(#wg)" stroke-width=".8" stroke-linejoin="round"></path><path d="M8 4.8v4.6" stroke="#33302b" stroke-width="1.1" stroke-linecap="round"></path><circle cx="8" cy="11.3" r=".75" fill="#33302b"></circle></svg></span>
<span class="t" style="left: 291.9px; top: 798px; font-size: 9.6px; font-weight: 700; color: rgb(153, 27, 27); -webkit-text-stroke: 0.45px rgb(153, 27, 27); transform: scaleX(1.126); transform-origin: 0px 50%;">Fix: Dental Implants - Microsoft</span>
<span class="t" style="left: 461px; top: 798px; font-size: 9px; font-weight: 700; color: rgb(100, 116, 139); -webkit-text-stroke: 0.2px rgb(100, 116, 139); transform: scaleX(0.907); transform-origin: 0px 50%;">GOOGLE</span>
<span class="t" style="left: 503.5px; top: 798px; font-size: 9.6px; font-weight: 700; color: rgb(15, 23, 42); -webkit-text-stroke: 0.3px rgb(15, 23, 42); letter-spacing: 0.31px;">— Costing £49.00 per conversion vs £34 target — reduce spend</span>
<div class="b " style="left:1770.1px;top:792.0px;width:79.0px;height:24.0px;border-radius:6.5px;background:#991b1b;"></div>
<span class="t" style="left: 1779.9px; top: 797px; font-size: 9.3px; font-weight: 700; color: rgb(255, 255, 255); -webkit-text-stroke: 0.5px rgb(255, 255, 255); letter-spacing: 0.24px;">Fix in Plan <i class="ar">→</i></span>
<div class="b " style="left:233.0px;top:852.0px;width:1504.0px;height:36.0px;border-radius:8px;background:#fef2f2;border:1px solid #fecaca;box-sizing:border-box;"></div>
<span class="ic" style="left:244.3px;top:865.8px"><svg width="11" height="10" viewBox="0 0 11 10"><path d="M5.5 1.1 10.1 9.1H.9z" fill="none" stroke="#a11d1d" stroke-width="1.5" stroke-linejoin="miter"></path><path d="M5.5 3v5.8" stroke="#a11d1d" stroke-width="1.4"></path></svg></span>
<span class="t" style="left: 263.5px; top: 862px; font-size: 9.6px; font-weight: 700; color: rgb(153, 27, 27); -webkit-text-stroke: 0.4px rgb(153, 27, 27); letter-spacing: 0.39px;">4 campaigns flagged — highlighted in red below.</span>
<div class="b " style="left:1746.5px;top:854.0px;width:131.5px;height:32.0px;border-radius:6px;background:#fff;border:1px solid #e5e8ee;box-sizing:border-box;"></div>
<span class="t" style="left: 1760.2px; top: 862px; font-size: 9.7px; font-weight: 700; color: rgb(30, 41, 59); -webkit-text-stroke: 0.45px rgb(30, 41, 59); transform: scaleX(1.106); transform-origin: 0px 50%;">Show 4 flagged only</span>
<div class="b " style="left:233.0px;top:900.0px;width:1645.0px;height:40.0px;border-radius:14px;background:#f9fbfd;border:1px solid #e5e8ee;box-sizing:border-box;"></div>
</div></main>
</body></html>
